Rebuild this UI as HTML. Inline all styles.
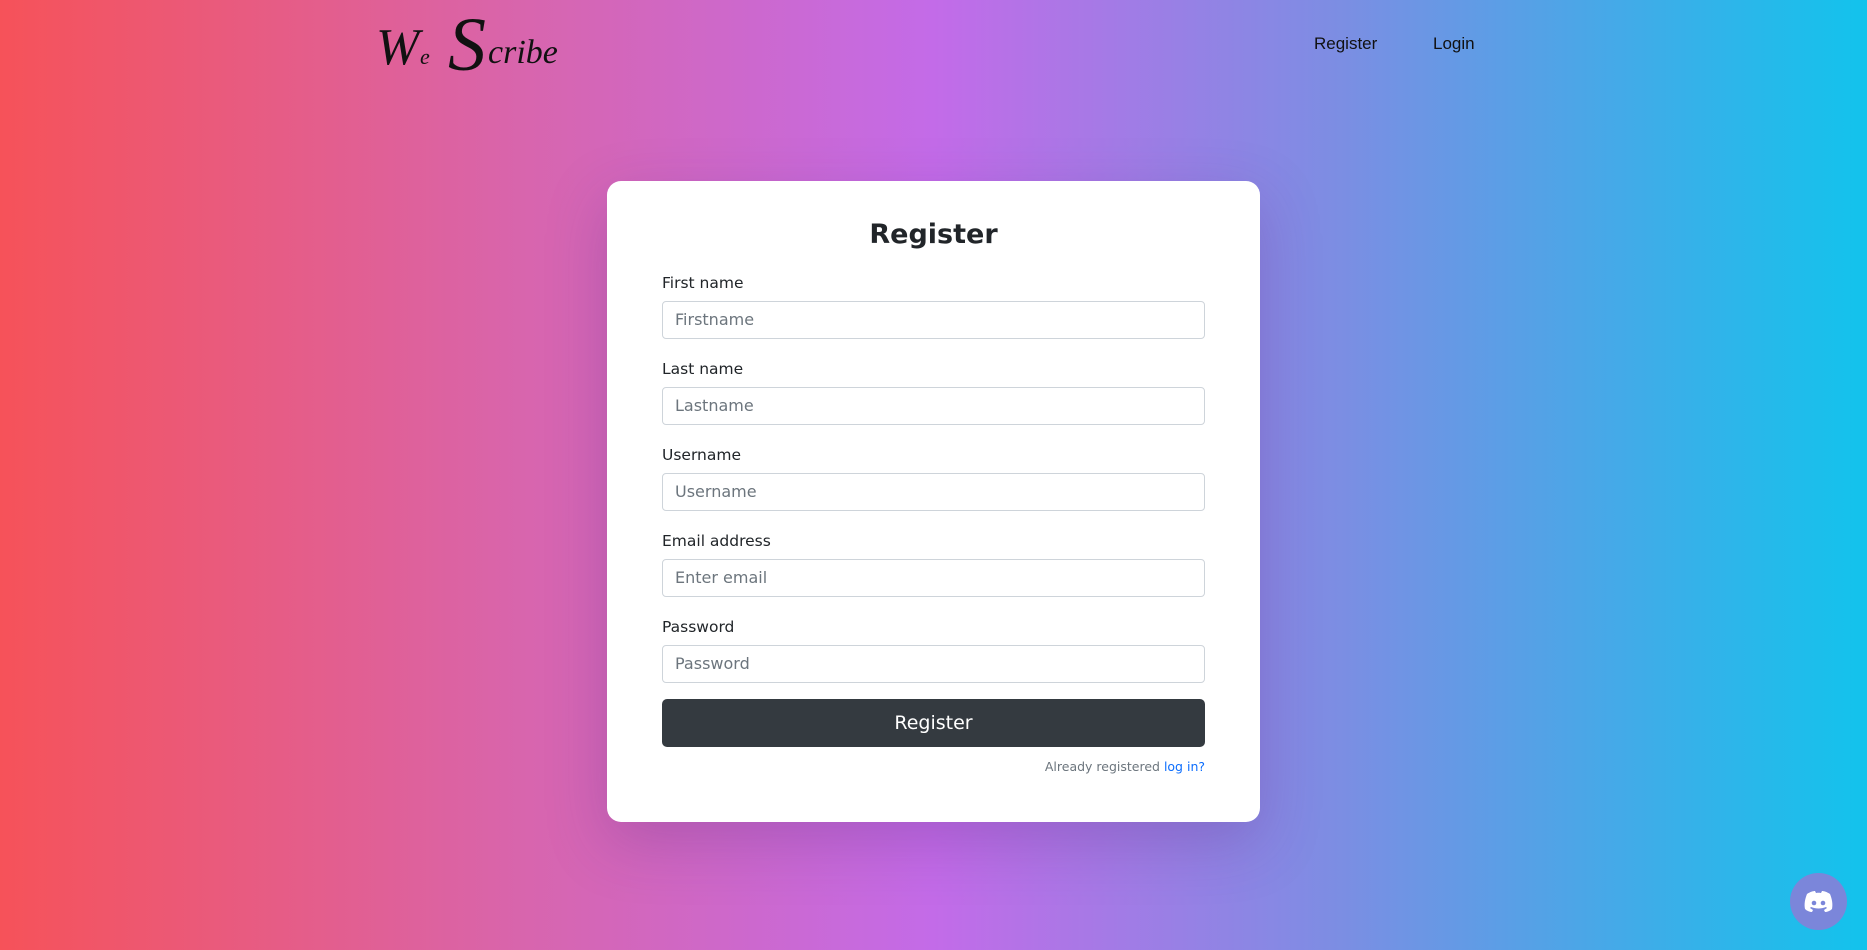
<!DOCTYPE html>
<html><head><meta charset="utf-8"><style>
*{box-sizing:border-box;margin:0;padding:0}
html,body{width:1867px;height:950px;overflow:hidden}
body{background:linear-gradient(90deg,#f65259 0%,#d865ad 28%,#c36be8 50%,#7b8ee3 72%,#12c3ec 100%);font-family:"DejaVu Sans","Liberation Sans",sans-serif;position:relative}
.logo{position:absolute;left:376px;top:8px;font-family:"Liberation Serif",serif;font-style:italic;color:#111;height:70px}
.nav a{position:absolute;top:34px;font-size:17px;color:#111;text-decoration:none;font-family:"Liberation Sans",sans-serif}
.card{position:absolute;left:607px;top:181px;width:653px;height:641px;background:#fff;border-radius:14px;box-shadow:0 20px 60px rgba(80,40,120,.25)}
h1{position:absolute;left:0;right:0;top:38px;text-align:center;font-size:27px;font-weight:bold;color:#212529}
.f{position:absolute;left:55px;width:543px}
.f label{display:block;font-size:15.5px;color:#212529;height:28px;line-height:20px}
.f div{height:38px;border:1px solid #ced4da;border-radius:4px;padding-left:12px;line-height:36px;font-size:16px;color:#6c757d}
.btn{position:absolute;left:55px;top:518px;width:543px;height:48px;background:#343a40;border-radius:5px;color:#fff;text-align:center;line-height:48px;font-size:19px}
.al{position:absolute;right:55px;top:578px;font-size:12.5px;color:#6c757d}
.al span{color:#0d6efd}
.dc{position:absolute;left:1790px;top:873px;width:57px;height:57px;border-radius:50%;background:#7b86da}
</style></head><body>
<div class="logo"><span style="font-size:52px;position:absolute;left:0;top:10px">W</span><span style="font-size:22px;position:absolute;left:44px;top:36px">e</span><span style="font-size:76px;position:absolute;left:72px;top:-6px">S</span><span style="font-size:34px;position:absolute;left:112px;top:26px">cribe</span></div>
<div class="nav"><a style="left:1314px">Register</a><a style="left:1433px">Login</a></div>
<div class="card">
<h1>Register</h1>
<div class="f" style="top:92px"><label>First name</label><div>Firstname</div></div>
<div class="f" style="top:178px"><label>Last name</label><div>Lastname</div></div>
<div class="f" style="top:264px"><label>Username</label><div>Username</div></div>
<div class="f" style="top:350px"><label>Email address</label><div>Enter email</div></div>
<div class="f" style="top:436px"><label>Password</label><div>Password</div></div>
<div class="btn">Register</div>
<div class="al">Already registered <span>log in?</span></div>
</div>
<div class="dc"><svg width="57" height="57" viewBox="0 0 57 57"><path d="M17 21c3-2 6-3 8-3l1 2c2-.3 3-.3 5 0l1-2c2 0 5 1 8 3 2 5 3 10 2 15-2 2-5 3-7 3l-1-2 3-2-1-1c-5 2-10 2-15 0l-1 1 3 2-1 2c-2 0-5-1-7-3-1-5 0-10 2-15z" fill="#fff"/><circle cx="24" cy="30" r="2.3" fill="#7b86da"/><circle cx="33" cy="30" r="2.3" fill="#7b86da"/></svg></div>
</body></html>
